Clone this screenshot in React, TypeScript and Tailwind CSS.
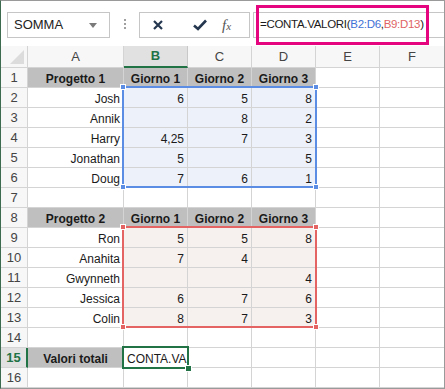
import React from "react";

type Cell = {
  t?: string;
  bold?: boolean;
  gray?: boolean;
  center?: boolean;
  left?: boolean;
  tint?: "blue" | "red";
};

const font = { fontFamily: "'Liberation Sans', Arial, sans-serif" };

const cols = ["A", "B", "C", "D", "E", "F"];

function header(name: string, g1: string): Cell[] {
  return [
    { t: name, bold: true, gray: true, center: true },
    { t: g1, bold: true, gray: true, center: true },
    { t: "Giorno 2", bold: true, gray: true, center: true },
    { t: "Giorno 3", bold: true, gray: true, center: true },
    {},
    {},
  ];
}

function data(name: string, vals: string[], tint: "blue" | "red"): Cell[] {
  return [
    { t: name },
    { t: vals[0], tint },
    { t: vals[1], tint },
    { t: vals[2], tint },
    {},
    {},
  ];
}

const empty: Cell[] = [{}, {}, {}, {}, {}, {}];

const rows: Cell[][] = [
  header("Progetto 1", "Giorno 1"),
  data("Josh", ["6", "5", "8"], "blue"),
  data("Annik", ["", "8", "2"], "blue"),
  data("Harry", ["4,25", "7", "3"], "blue"),
  data("Jonathan", ["5", "", "5"], "blue"),
  data("Doug", ["7", "6", "1"], "blue"),
  empty,
  header("Progetto 2", "Giorno 1"),
  data("Ron", ["5", "5", "8"], "red"),
  data("Anahita", ["7", "4", ""], "red"),
  data("Gwynneth", ["", "", "4"], "red"),
  data("Jessica", ["6", "7", "6"], "red"),
  data("Colin", ["8", "7", "3"], "red"),
  empty,
  [{ t: "Valori totali", bold: true, gray: true, center: true }, { t: "CONTA.VALORI(B2:D6,B9:D13)", left: true }, {}, {}, {}, {}],
  empty,
];

function Handle({ x, y, color }: { x: number; y: number; color: string }) {
  return (
    <div
      className="absolute w-[6px] h-[6px] border border-white"
      style={{ left: x - 3, top: y - 3, backgroundColor: color }}
    />
  );
}

function Range({ top, color }: { top: number; color: string }) {
  return (
    <>
      <div
        className="absolute left-[121px] w-[195px] h-[102px] border-2"
        style={{ top, borderColor: color }}
      />
      <Handle x={122} y={top + 1} color={color} />
      <Handle x={315} y={top + 1} color={color} />
      <Handle x={122} y={top + 101} color={color} />
      <Handle x={315} y={top + 101} color={color} />
    </>
  );
}

export default function App() {
  return (
    <div
      className="relative w-[445px] h-[389px] overflow-hidden bg-white border border-[#9a9a9a] border-l-[#3d6b50] text-[#1a1a1a]"
      style={font}
    >
      {/* toolbar */}
      <div className="flex items-start h-[45px] pt-[11px] pl-[6px]">
        <div className="relative shrink-0 flex items-center w-[103px] h-[26px] border border-[#c6c6c6] pl-[6px] text-[13px] text-[#222]">
          SOMMA
          <span className="absolute right-[12px] top-[10px] w-0 h-0 border-l-[4px] border-r-[4px] border-t-[5px] border-l-transparent border-r-transparent border-t-[#7a7a7a]" />
        </div>
        <div className="shrink-0 flex flex-col gap-[2px] mt-[7px] ml-[14px] mr-[13px]">
          <span className="w-[2px] h-[2px] bg-[#a0a0a0]" />
          <span className="w-[2px] h-[2px] bg-[#a0a0a0]" />
          <span className="w-[2px] h-[2px] bg-[#a0a0a0]" />
        </div>
        <div className="shrink-0 flex items-center w-[111px] h-[26px] border border-[#c6c6c6]">
          <svg width="12" height="12" viewBox="0 0 12 12" className="ml-[12px]">
            <path d="M2 2 L10 10 M10 2 L2 10" stroke="#24374f" strokeWidth="2.2" />
          </svg>
          <svg width="16" height="14" viewBox="0 0 16 14" className="ml-[28px]">
            <path d="M2 7.5 L6 11 L14 2.5" stroke="#24374f" strokeWidth="2.6" fill="none" />
          </svg>
          <span
            className="ml-[14px] italic text-[15px] text-[#555]"
            style={{ fontFamily: "'Liberation Serif', serif" }}
          >
            f<span className="text-[11px]">x</span>
          </span>
        </div>
        <div className="flex items-center flex-1 min-w-0 h-[26px] ml-[3px] border-y border-l border-[#c6c6c6] pl-[6px] text-[11.5px] tracking-[-0.3px] whitespace-nowrap">
          <span>=CONTA.VALORI(</span>
          <span className="text-[#3f72d6]">B2:D6</span>
          <span>,</span>
          <span className="text-[#e06464]">B9:D13</span>
          <span>)</span>
          <span className="ml-[2px] w-px h-[16px] bg-black" />
        </div>
      </div>

      {/* sheet */}
      <div className="grid grid-cols-[27px_96px_64px_64px_64px_64px_64px] grid-rows-[22px_repeat(16,20px)] text-[12px]">
        <div className="relative border-r border-b border-[#d4d4d4] bg-[#f7f7f7]">
          <svg width="14" height="14" viewBox="0 0 14 14" className="absolute right-[3px] bottom-[3px]">
            <path d="M14 0 L14 14 L0 14 Z" fill="#dcdcdc" />
          </svg>
        </div>
        {cols.map((c) =>
          c === "B" ? (
            <div
              key={c}
              className="flex items-center justify-center border-r border-[#c8c8c8] border-b-2 border-b-[#217346] bg-[#e1e1e1] text-[13px] font-bold text-[#217346]"
            >
              {c}
            </div>
          ) : (
            <div
              key={c}
              className={`flex items-center justify-center border-b border-[#d4d4d4] bg-[#f7f7f7] text-[13px] text-[#444] ${c === "F" ? "" : "border-r"}`}
            >
              {c}
            </div>
          )
        )}
        {rows.map((row, r) => (
          <React.Fragment key={r}>
            {r === 14 ? (
              <div className="flex items-center justify-center border-r-2 border-r-[#217346] border-b border-b-[#d4d4d4] bg-[#e1e1e1] text-[13px] font-bold text-[#217346]">
                {r + 1}
              </div>
            ) : (
              <div className="flex items-center justify-center border-r border-b border-[#d4d4d4] bg-[#f7f7f7] text-[13px] text-[#444]">
                {r + 1}
              </div>
            )}
            {row.map((cell, c) => (
              <div
                key={c}
                className={[
                  "flex items-center overflow-hidden whitespace-nowrap border-b border-[#d4d4d4] pt-[2px]",
                  c === 5 ? "" : "border-r",
                  cell.center ? "justify-center" : cell.left ? "justify-start pl-[3px]" : "justify-end pr-[3px]",
                  cell.gray ? "bg-[#bfbfbf]" : "",
                  cell.tint === "blue" ? "bg-[#edf1f9]" : "",
                  cell.tint === "red" ? "bg-[#f6f0ee]" : "",
                  cell.bold ? "font-bold" : "",
                ].join(" ")}
              >
                {cell.t}
              </div>
            ))}
          </React.Fragment>
        ))}
      </div>

      {/* selections */}
      <Range top={85} color="#5b8de4" />
      <Range top={225} color="#e46464" />
      <div className="absolute left-[121px] top-[345px] w-[67px] h-[23px] border-2 border-[#217346]" />
      <div className="absolute left-[184px] top-[364px] w-[7px] h-[7px] bg-[#217346] border border-white" />

      {/* annotation */}
      <div className="absolute left-[255px] top-[4px] w-[173px] h-[40px] border-[3px] border-[#e5067f]" />
    </div>
  );
}
